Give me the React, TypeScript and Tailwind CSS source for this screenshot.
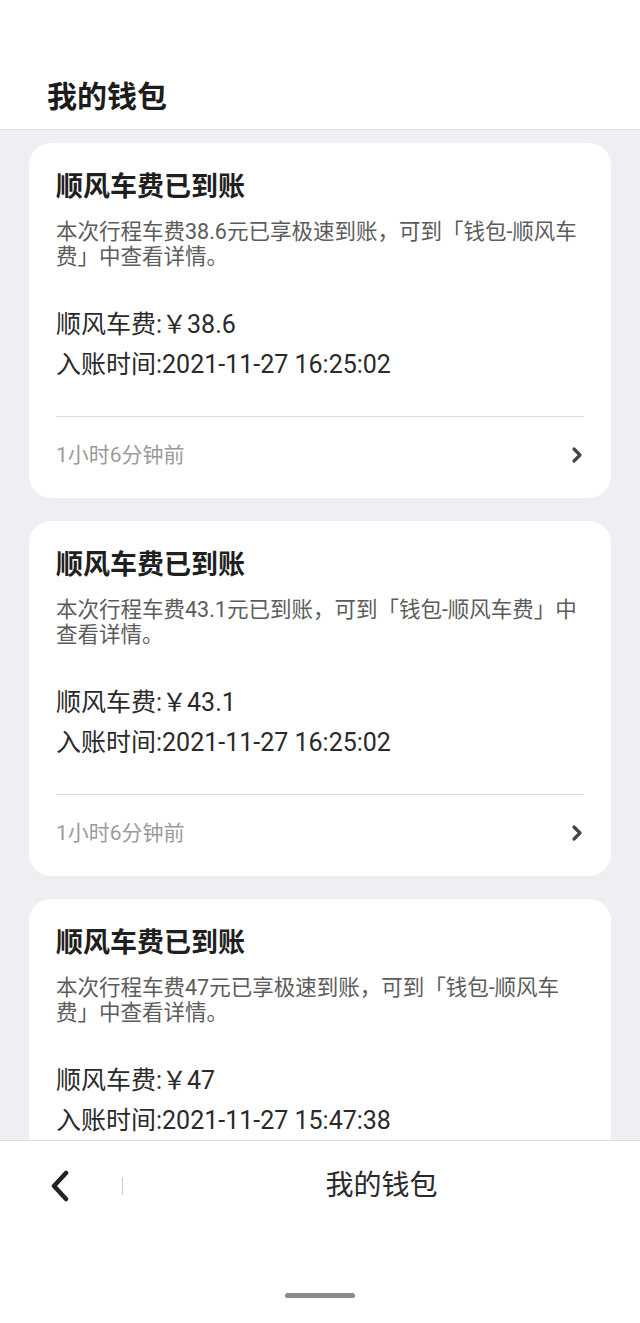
import React from "react";

type Item = {
  desc: string;
  fee: string;
  time: string;
  ago?: string;
};

const items: Item[] = [
  {
    desc: "本次行程车费38.6元已享极速到账，可到「钱包-顺风车费」中查看详情。",
    fee: "38.6",
    time: "2021-11-27 16:25:02",
    ago: "1小时6分钟前",
  },
  {
    desc: "本次行程车费43.1元已到账，可到「钱包-顺风车费」中查看详情。",
    fee: "43.1",
    time: "2021-11-27 16:25:02",
    ago: "1小时6分钟前",
  },
  {
    desc: "本次行程车费47元已享极速到账，可到「钱包-顺风车费」中查看详情。",
    fee: "47",
    time: "2021-11-27 15:47:38",
    ago: "1小时44分钟前",
  },
];

function Card({ item }: { item: Item }) {
  return (
    <div className="bg-white rounded-[22px] px-[27px] pt-[25px] shrink-0">
      <div className="text-[27px] leading-[38px] font-bold text-[#1f1f1f]">顺风车费已到账</div>
      <p className="mt-[13px] text-[21.5px] leading-[25px] text-[#5c5c5c]">{item.desc}</p>
      <div className="mt-[36px] text-[25px] leading-[40px] text-[#2a2a2a]">
        <div>顺风车费:￥{item.fee}</div>
        <div>入账时间:{item.time}</div>
      </div>
      <div className="mt-[31px] border-t border-[#dcdcdc] flex items-center justify-between pt-[24px] pb-[29px]">
        <span className="text-[21px] leading-[28px] text-[#9a9a9a]">{item.ago}</span>
        <svg width="15" height="18" viewBox="0 0 15 18">
          <path d="M5 3 L11 9 L5 15" fill="none" stroke="#454545" strokeWidth="3.2" strokeLinecap="round" strokeLinejoin="round" />
        </svg>
      </div>
    </div>
  );
}

export default function App() {
  return (
    <div
      className="w-[640px] h-[1323px] flex flex-col bg-[#efeff3] overflow-hidden"
      style={{ fontFamily: 'Roboto, "Noto Sans CJK SC", sans-serif' }}
    >
      <header className="h-[130px] shrink-0 bg-white border-b border-[#e2e2e6] flex items-end px-[47px] pb-[12px]">
        <h1 className="text-[30px] leading-[40px] font-bold text-[#1c1c1c]">我的钱包</h1>
      </header>

      <main className="flex-1 overflow-hidden px-[29px] pt-[13px] flex flex-col gap-[23px]">
        {items.map((item, i) => (
          <Card key={i} item={item} />
        ))}
      </main>

      <footer className="h-[183px] shrink-0 bg-white border-t border-[#dcdcdf] flex flex-col">
        <div className="flex items-center h-[90px] pl-[46px]">
          <svg width="28" height="32" viewBox="0 0 28 32">
            <path d="M20 3 L8 16 L20 29" fill="none" stroke="#232323" strokeWidth="4.5" strokeLinecap="round" strokeLinejoin="round" />
          </svg>
          <div className="ml-[48px] w-px h-[18px] bg-[#cfcfcf]" />
          <span className="flex-1 text-center text-[28px] leading-[36px] text-[#2a2a2a]">我的钱包</span>
        </div>
        <div className="flex-1 flex items-end justify-center pb-[25px]">
          <div className="w-[70px] h-[5px] rounded-full bg-[#8a8a8a]" />
        </div>
      </footer>
    </div>
  );
}
